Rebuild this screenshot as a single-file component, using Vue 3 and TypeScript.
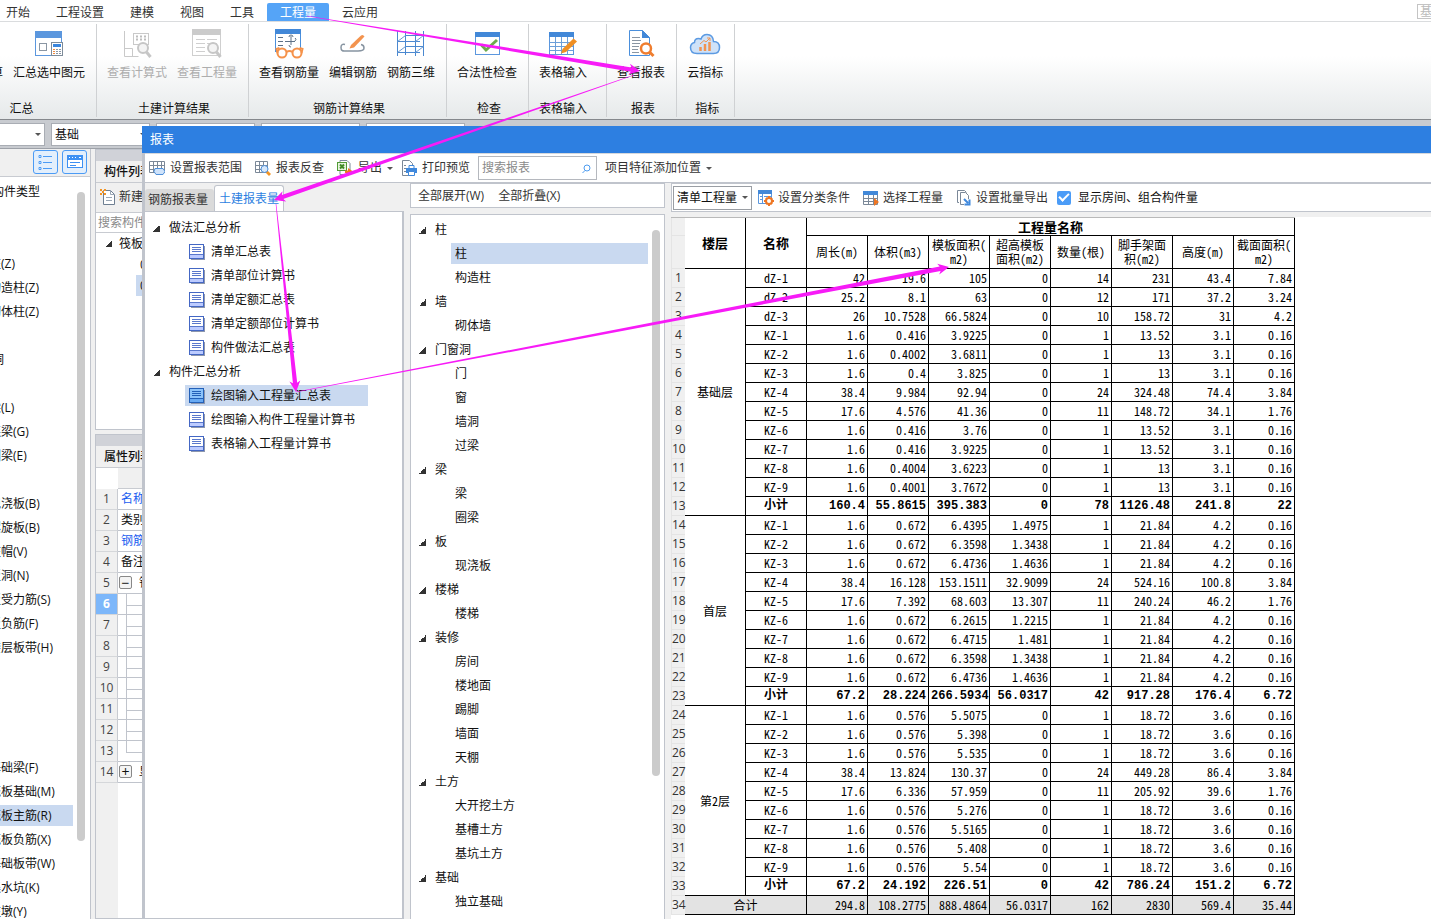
<script setup lang="ts">
import { ref } from 'vue'

interface RibbonItem { label: string; icon: string; disabled?: boolean }
interface RibbonGroup { title: string; kind?: string; items: RibbonItem[] }
interface TreeGroup { title: string; items: string[] }
interface Row { name: string; values: string[]; total?: boolean }
interface Floor { name: string; rows: Row[] }

const menus = ['开始', '工程设置', '建模', '视图', '工具', '工程量', '云应用']
const activeMenu = ref('工程量')

const icons: Record<string, string> = {
  sumAll: '<rect x="3.5" y="3.5" width="25" height="22" fill="#fff" stroke="#5b97de"/>',
  sumPick:
    '<rect x="2.5" y="2.5" width="26" height="24" fill="#fff" stroke="#5b97de"/><rect x="2" y="2" width="27" height="7" fill="#5b97de"/><rect x="6.5" y="14.5" width="7" height="7" fill="#fff" stroke="#8a96a3"/><rect x="18.5" y="13.5" width="11" height="13" fill="#fff" stroke="#7d8b99"/><rect x="20" y="15" width="8" height="3" fill="#3b86dd"/><path d="M20 20.5h2M20 22.5h2M20 24.5h2" stroke="#f08a3c"/><path d="M23 20.5h2M26 20.5h2M23 22.5h2M26 22.5h2M23 24.5h2M26 24.5h2" stroke="#8a96a3"/>',
  formula:
    '<path d="M3.5 2v25.500h14M3.500 19.500h8v8" fill="none" stroke="#c9c9c9"/><rect x="12.500" y="4.500" width="15" height="11" fill="#fff" stroke="#c9c9c9"/><path d="M15 7.500h2M19 7.500h2M23 7.500h2M15 10.500h2M19 10.500h2M23 10.500h2" stroke="#bdbdbd" stroke-width="2"/><circle cx="22" cy="19" r="5" fill="#f4f4f4" stroke="#c6c6c6" stroke-width="2"/><path d="M25.500 23l4 5" stroke="#c6c6c6" stroke-width="3"/>',
  quantity:
    '<rect x="1.500" y=".5" width="28" height="26" fill="#fff" stroke="#cfcfcf"/><rect x="1" y="0" width="29" height="6" fill="#cbcbcb"/><path d="M5 10.500h9M16 10.500h10M5 14.500h9M16 14.500h10M5 18.500h9M5 22.500h9" stroke="#cfcfcf"/><circle cx="22" cy="19" r="5" fill="#f4f4f4" stroke="#c6c6c6" stroke-width="2"/><path d="M25.500 23l4 5" stroke="#c6c6c6" stroke-width="3"/>',
  rebarView:
    '<rect x="2.500" y=".5" width="25" height="22" fill="#fff" stroke="#4a8fdc"/><rect x="2" y="0" width="26" height="5" fill="#4288d8"/><path d="M5 8.500h5M5 12.500h5M5 16.500h5M12 12.500h10M18 7v9M16 8q0-2 2-2t2 2M22 12q2-2 0-3M16 16q0 2 2 2" fill="none" stroke="#5e7186"/><circle cx="9" cy="24" r="4.500" fill="#fff" stroke="#f5924a" stroke-width="2"/><circle cx="24" cy="24" r="4.500" fill="#fff" stroke="#f5924a" stroke-width="2"/><path d="M13.500 23q3-2 6 0M4.500 24l-1-4 3-1M28.500 24l1-4-3-1" fill="none" stroke="#f5924a" stroke-width="2"/>',
  rebarEdit:
    '<path d="M8 15.500q-4-1-4 3t4 3.500h13q6 0 6-3t-3-3.500" fill="none" stroke="#8794a1" stroke-width="1.500"/><path d="M14 16l10-9.500q2-1.500 3.500 1L17 18.500l-4.500 1z" fill="#f3934e"/>',
  rebar3d:
    '<path d="M2.500 2v25M10.500 2v24M20.500 2v25M28.500 2v25M10 6.500h19M2 12.500h23M10 17.500h19M2 23.500h23" fill="none" stroke="#4a88d0"/><path d="M2.500 12.500l8-6M20.500 12.500l8-6M2.500 23.500l8-6M20.500 23.500l8-6" fill="none" stroke="#6b9bd2"/>',
  check:
    '<rect x="4.500" y="3.500" width="24" height="22" fill="#fff" stroke="#5b97de"/><rect x="4" y="3" width="25" height="5" fill="#4288d8"/><path d="M10 15.500l5 5.500L26 11" fill="none" stroke="#6cab4c" stroke-width="3"/>',
  sheet:
    '<rect x="2.500" y="3.500" width="24" height="22" fill="#fff" stroke="#5b97de"/><rect x="2" y="3" width="25" height="5" fill="#4288d8"/><path d="M3 13.500h23M3 17.500h23M3 21.500h23M8.500 8v17M14.500 8v17M20.500 8v17" stroke="#6c9fd9"/><path d="M26.500 9.500l3.500 3L19 23l-5 1.500 1.500-4.500z" fill="#ef8f24"/>',
  report:
    '<path d="M4.500 1.500h13l7 7v18h-20z" fill="#fff" stroke="#4a8fdc"/><path d="M17 1v8h8z" fill="#4288d8"/><path d="M7 8.500h8M7 11.500h9M7 14.500h8M7 17.500h7M7 20.500h6M7 23.500h7" stroke="#8a96a3"/><circle cx="21" cy="19.500" r="5" fill="#fff" stroke="#ef7d2e" stroke-width="2.500"/><path d="M24.500 23l4 4" stroke="#ef7d2e" stroke-width="3"/>',
  cloud:
    '<path d="M8 24.500q-6.500 0-6.500-6 0-4 4-5 0-4 4-4 1.500 0 2.500.5 1.500-4.500 6-4.500 6 0 6.500 7 6 0 6 6t-6 6z" fill="#cfe2f8" stroke="#5b9ae2" stroke-width="1.500"/><path d="M11.500 22v-4M16 22v-7M20.500 22v-9" stroke="#f19450" stroke-width="2.500"/><path d="M11 15l4-3.500 2 1.500 4-4M18 9h3v3" fill="none" stroke="#f19450"/>'
}

const ribbon: RibbonGroup[] = [
  { title: '汇总', kind: 'first', items: [{ label: '汇总计算', icon: 'sumAll' }, { label: '汇总选中图元', icon: 'sumPick' }] },
  { title: '土建计算结果', items: [{ label: '查看计算式', icon: 'formula', disabled: true }, { label: '查看工程量', icon: 'quantity', disabled: true }] },
  { title: '钢筋计算结果', items: [{ label: '查看钢筋量', icon: 'rebarView' }, { label: '编辑钢筋', icon: 'rebarEdit' }, { label: '钢筋三维', icon: 'rebar3d' }] },
  { title: '检查', items: [{ label: '合法性检查', icon: 'check' }] },
  { title: '表格输入', kind: 'roomy', items: [{ label: '表格输入', icon: 'sheet' }] },
  { title: '报表', items: [{ label: '查看报表', icon: 'report' }] },
  { title: '指标', items: [{ label: '云指标', icon: 'cloud' }] }
]

const componentTypes: { text: string; top?: boolean }[] = [
  { text: '常用构件类型', top: true }, { text: '' }, { text: '' },
  { text: '柱(Z)' }, { text: '构造柱(Z)' }, { text: '砌体柱(Z)' }, { text: '' },
  { text: '门窗洞', top: true }, { text: '' },
  { text: '梁(L)' }, { text: '连梁(G)' }, { text: '圈梁(E)' }, { text: '' },
  { text: '现浇板(B)' }, { text: '螺旋板(B)' }, { text: '柱帽(V)' }, { text: '板洞(N)' },
  { text: '板受力筋(S)' }, { text: '板负筋(F)' }, { text: '楼层板带(H)' },
  { text: '' }, { text: '' }, { text: '' }, { text: '' },
  { text: '基础梁(F)' }, { text: '筏板基础(M)' }, { text: '筏板主筋(R)' }, { text: '筏板负筋(X)' },
  { text: '基础板带(W)' }, { text: '集水坑(K)' }, { text: '柱墩(Y)' }
]
const activeType = ref('筏板主筋(R)')

const properties: { text: string; link?: boolean; fold?: string; branch?: boolean }[] = [
  { text: '名称', link: true }, { text: '类别' }, { text: '钢筋', link: true }, { text: '备注' },
  { text: '钢', fold: '−' },
  ...Array.from({ length: 8 }, () => ({ text: '', branch: true })),
  { text: '显', fold: '+' }
]

const reportTree: TreeGroup[] = [
  { title: '做法汇总分析', items: ['清单汇总表', '清单部位计算书', '清单定额汇总表', '清单定额部位计算书', '构件做法汇总表'] },
  { title: '构件汇总分析', items: ['绘图输入工程量汇总表', '绘图输入构件工程量计算书', '表格输入工程量计算书'] }
]
const activeReport = ref('绘图输入工程量汇总表')

const partTree: TreeGroup[] = [
  { title: '柱', items: ['柱', '构造柱'] },
  { title: '墙', items: ['砌体墙'] },
  { title: '门窗洞', items: ['门', '窗', '墙洞', '过梁'] },
  { title: '梁', items: ['梁', '圈梁'] },
  { title: '板', items: ['现浇板'] },
  { title: '楼梯', items: ['楼梯'] },
  { title: '装修', items: ['房间', '楼地面', '踢脚', '墙面', '天棚'] },
  { title: '土方', items: ['大开挖土方', '基槽土方', '基坑土方'] },
  { title: '基础', items: ['独立基础'] }
]
const activePart = ref('柱')

const columns = ['周长(m)', '体积(m3)', '模板面积(\nm2)', '超高模板\n面积(m2)', '数量(根)', '脚手架面\n积(m2)', '高度(m)', '截面面积(\nm2)']

function rows(text: string): Row[] {
  return text.trim().split('\n').map((line) => {
    const [name, ...values] = line.trim().split(' ')
    return { name, values, total: name === '小计' }
  })
}

const floors: Floor[] = [
  {
    name: '基础层',
    rows: rows(`
      dZ-1 42 19.6 105 0 14 231 43.4 7.84
      dZ-2 25.2 8.1 63 0 12 171 37.2 3.24
      dZ-3 26 10.7528 66.5824 0 10 158.72 31 4.2
      KZ-1 1.6 0.416 3.9225 0 1 13.52 3.1 0.16
      KZ-2 1.6 0.4002 3.6811 0 1 13 3.1 0.16
      KZ-3 1.6 0.4 3.825 0 1 13 3.1 0.16
      KZ-4 38.4 9.984 92.94 0 24 324.48 74.4 3.84
      KZ-5 17.6 4.576 41.36 0 11 148.72 34.1 1.76
      KZ-6 1.6 0.416 3.76 0 1 13.52 3.1 0.16
      KZ-7 1.6 0.416 3.9225 0 1 13.52 3.1 0.16
      KZ-8 1.6 0.4004 3.6223 0 1 13 3.1 0.16
      KZ-9 1.6 0.4001 3.7672 0 1 13 3.1 0.16
      小计 160.4 55.8615 395.383 0 78 1126.48 241.8 22`)
  },
  {
    name: '首层',
    rows: rows(`
      KZ-1 1.6 0.672 6.4395 1.4975 1 21.84 4.2 0.16
      KZ-2 1.6 0.672 6.3598 1.3438 1 21.84 4.2 0.16
      KZ-3 1.6 0.672 6.4736 1.4636 1 21.84 4.2 0.16
      KZ-4 38.4 16.128 153.1511 32.9099 24 524.16 100.8 3.84
      KZ-5 17.6 7.392 68.603 13.307 11 240.24 46.2 1.76
      KZ-6 1.6 0.672 6.2615 1.2215 1 21.84 4.2 0.16
      KZ-7 1.6 0.672 6.4715 1.481 1 21.84 4.2 0.16
      KZ-8 1.6 0.672 6.3598 1.3438 1 21.84 4.2 0.16
      KZ-9 1.6 0.672 6.4736 1.4636 1 21.84 4.2 0.16
      小计 67.2 28.224 266.5934 56.0317 42 917.28 176.4 6.72`)
  },
  {
    name: '第2层',
    rows: rows(`
      KZ-1 1.6 0.576 5.5075 0 1 18.72 3.6 0.16
      KZ-2 1.6 0.576 5.398 0 1 18.72 3.6 0.16
      KZ-3 1.6 0.576 5.535 0 1 18.72 3.6 0.16
      KZ-4 38.4 13.824 130.37 0 24 449.28 86.4 3.84
      KZ-5 17.6 6.336 57.959 0 11 205.92 39.6 1.76
      KZ-6 1.6 0.576 5.276 0 1 18.72 3.6 0.16
      KZ-7 1.6 0.576 5.5165 0 1 18.72 3.6 0.16
      KZ-8 1.6 0.576 5.408 0 1 18.72 3.6 0.16
      KZ-9 1.6 0.576 5.54 0 1 18.72 3.6 0.16
      小计 67.2 24.192 226.51 0 42 786.24 151.2 6.72`)
  }
]
const grandTotal = ['294.8', '108.2775', '888.4864', '56.0317', '162', '2830', '569.4', '35.44']
const firstNumber = (index: number) => floors.slice(0, index).reduce((sum, floor) => sum + floor.rows.length, 1)

/* Tapered arrow: thin at the start, widening up to its head. */
function arrow(x1: number, y1: number, x2: number, y2: number): string {
  const length = Math.hypot(x2 - x1, y2 - y1)
  const ux = (x2 - x1) / length
  const uy = (y2 - y1) / length
  const at = (back: number, side: number) =>
    `${(x2 - ux * back - uy * side).toFixed(1)},${(y2 - uy * back + ux * side).toFixed(1)}`
  return [at(length, 0.3), at(9, 2.2), at(11, 5.5), at(0, 0), at(11, -5.5), at(9, -2.2), at(length, -0.3)].join(' ')
}
const arrows = [arrow(307, 16, 640, 71), arrow(634, 75, 274, 200), arrow(276, 204, 296, 392), arrow(296, 392, 949, 267)]
</script>

<template>
  <div class="app">
    <nav class="menubar">
      <button v-for="m in menus" :key="m" class="menu" :class="{ active: m === activeMenu }" @click="activeMenu = m">{{ m }}</button>
      <span class="corner">基</span>
    </nav>

    <section class="ribbon">
      <div v-for="g in ribbon" :key="g.title" class="group" :class="g.kind">
        <div class="group-items">
          <button v-for="item in g.items" :key="item.label" class="tool" :disabled="item.disabled">
            <svg width="32" height="30" viewBox="0 0 32 30" aria-hidden="true" v-html="icons[item.icon]"></svg>
            <span>{{ item.label }}</span>
          </button>
        </div>
        <div class="group-title">{{ g.title }}</div>
      </div>
    </section>

    <section class="optionbar">
      <span class="combo short"><select aria-label="楼层"><option></option></select></span>
      <span class="combo"><select aria-label="分类"><option>基础</option></select></span>
      <span v-for="n in 3" :key="n" class="combo"><select :aria-label="'选项' + n"><option></option></select></span>
    </section>

    <main class="workspace">
      <aside class="types">
        <header class="types-head">
          <button class="square" aria-label="列表">
            <svg width="16" height="16" viewBox="0 0 16 16"><path d="M5 2.500h9M5 8.500h9M5 14.500h9" stroke="#4b9bf5"/><path d="M1 1.500h2v2H1zM1 7.500h2v2H1zM1 13.500h2v2H1z" fill="#fff" stroke="#4b9bf5"/></svg>
          </button>
          <button class="square" aria-label="面板">
            <svg width="16" height="16" viewBox="0 0 16 16"><rect x=".5" y="1.500" width="15" height="12" fill="#fff" stroke="#3d90f3"/><path d="M0 1h16v5H0z" fill="#3d90f3"/><path d="M2 3.500h1M5 3.500h1M8 3.500h1M12 3l1 1 1-1" stroke="#fff" fill="none"/><path d="M3 8.500h10M3 11.500h6" stroke="#3d90f3"/></svg>
          </button>
        </header>
        <div class="types-body">
          <ul class="types-list">
            <li v-for="(t, i) in componentTypes" :key="i" :class="{ top: t.top, selected: t.text === activeType }">{{ t.text }}</li>
          </ul>
          <i class="scroll"></i>
        </div>
      </aside>

      <div class="docks">
        <section class="dock components">
          <div class="grip"></div>
          <h2>构件列表</h2>
          <div class="dock-tools">
            <button class="flat">
              <svg width="16" height="16" viewBox="0 0 16 16"><path d="M3.500 1.500h7l4 4v10h-11z" fill="#fff" stroke="#6e7f92"/><path d="M10.500 1.500v4h4M6 8.500h6M6 11.500h6" fill="none" stroke="#9aa7b5"/><path d="M0 0h2v2H0zM4 0h2v2H4zM2 2h2v2H2zM0 4h2v2H0zM4 4h2v2H4z" fill="#f39423"/></svg>
              <span>新建</span>
            </button>
          </div>
          <input class="dock-search" type="text" placeholder="搜索构件" aria-label="搜索构件" />
          <ul class="dock-tree">
            <li><i class="fold"></i>筏板</li>
            <li class="entry">0</li>
            <li class="entry picked">0</li>
          </ul>
        </section>

        <section class="dock props">
          <div class="grip"></div>
          <h2>属性列表</h2>
          <div class="prop-head"><span></span></div>
          <ol class="prop-rows">
            <li v-for="(p, i) in properties" :key="i" :class="{ current: i === 5, branch: p.branch, last: i === 12 }">
              <span class="no">{{ i + 1 }}</span>
              <span class="value" :class="{ link: p.link }"><button v-if="p.fold" class="toggle">{{ p.fold }}</button>{{ p.text }}</span>
            </li>
          </ol>
          <div class="prop-rest"></div>
        </section>
      </div>
    </main>

    <section class="dialog" role="dialog" aria-label="报表">
      <header class="titlebar">报表</header>
      <div class="dialog-body">
        <div class="dialog-tools">
          <button class="flat">
            <svg width="16" height="16" viewBox="0 0 16 16"><path d="M.5 1.500h15v11H.5zM.5 5.500h15M.5 9.500h15M4.500 1v11M8.500 1v11M12.500 1v11" fill="#fff" stroke="#7b8898"/><path d="M6 8.500h8l2 3-2 3H7l-2-3z" fill="#cfe3fb" stroke="#4d8fd9"/></svg>
            <span>设置报表范围</span>
          </button>
          <button class="flat">
            <svg width="16" height="16" viewBox="0 0 16 16"><path d="M.5 1.500h12v11H.5zM.5 5.500h12M.5 9.500h12M4.500 1v11M8.500 1v11" fill="#fff" stroke="#7b8898"/><circle cx="9.500" cy="9" r="3.500" fill="#d7e8fb" stroke="#4d8fd9"/><path d="M13 11l3 3-2 2-3-3z" fill="#f39423"/></svg>
            <span>报表反查</span>
          </button>
          <button class="flat menu-button">
            <svg width="16" height="16" viewBox="0 0 16 16"><path d="M3 .5h7l3 3v11H3z" fill="#fff" stroke="#7b8898"/><rect x=".5" y="2.500" width="9" height="8" fill="#e7f4df" stroke="#519b35"/><path d="M3 4.500l4 4M7 4.500l-4 4" stroke="#418a27" stroke-width="2"/><path d="M8 10.500h3V8l5 3.500-5 4V13H8z" fill="#ee7623"/></svg>
            <span>导出</span><i class="caret"></i>
          </button>
          <button class="flat">
            <svg width="16" height="16" viewBox="0 0 16 16"><path d="M1.500.5h7l3 3v12h-10z" fill="#fff" stroke="#7b8898"/><path d="M3 5.500h2M3 8.500h2M3 11.500h2" stroke="#7b8898"/><path d="M8 5.500h5v3H8z" fill="#fff" stroke="#3f88dc"/><rect x="5" y="8" width="11" height="5" fill="#3f88dc"/><path d="M7.500 11.500h6v4h-6z" fill="#fff" stroke="#3f88dc"/></svg>
            <span>打印预览</span>
          </button>
          <label class="search">
            <input type="text" placeholder="搜索报表" aria-label="搜索报表" />
            <svg width="14" height="11" viewBox="0 0 14 11"><circle cx="8" cy="5" r="3" fill="none" stroke="#4d9cf0"/><path d="M6 7.500L3.500 10" stroke="#4d9cf0"/></svg>
          </label>
          <button class="flat menu-button"><span>项目特征添加位置</span><i class="caret"></i></button>
        </div>

        <div class="panes">
          <div class="pane reports">
            <div class="tabs" role="tablist">
              <button role="tab" aria-selected="false">钢筋报表量</button>
              <button role="tab" aria-selected="true" class="on">土建报表量</button>
            </div>
            <div class="report-tree">
              <template v-for="g in reportTree" :key="g.title">
                <div class="node"><i class="fold"></i>{{ g.title }}</div>
                <button v-for="r in g.items" :key="r" class="leaf" :class="{ selected: r === activeReport }" @click="activeReport = r">
                  <svg width="16" height="16" viewBox="0 0 16 16"><path d="M2 2h14v14H2z" fill="#8d97ad"/><rect x=".5" y=".5" width="14" height="14" :fill="r === activeReport ? '#8cc3fa' : '#fff'" :stroke="r === activeReport ? '#2360b8' : '#4467c4'"/><path d="M1 11h13v3H1z" :fill="r === activeReport ? '#68aaf3' : '#bccbff'"/><path d="M3 3.500h9M3 5.500h9M3 7.500h9M1 10.500h13" :stroke="r === activeReport ? '#2360b8' : '#5a78cc'"/></svg>
                  <span>{{ r }}</span>
                </button>
              </template>
            </div>
          </div>

          <div class="pane parts">
            <div class="box part-tools">
              <button class="flat"><span>全部展开(W)</span></button>
              <button class="flat"><span>全部折叠(X)</span></button>
            </div>
            <div class="box part-box">
              <div class="part-tree">
                <template v-for="g in partTree" :key="g.title">
                  <div class="node"><i class="fold"></i>{{ g.title }}</div>
                  <button v-for="p in g.items" :key="p" class="leaf" :class="{ selected: p === activePart && g.title === activePart }" @click="activePart = p">{{ p }}</button>
                </template>
              </div>
              <i class="scroll"></i>
            </div>
          </div>

          <div class="pane sheet">
            <div class="box sheet-tools">
              <span class="combo kind"><select aria-label="工程量类型"><option>清单工程量</option></select></span>
              <button class="flat">
                <svg width="16" height="16" viewBox="0 0 16 16"><path d="M.5.5h13v13H.5zM4.500 4v9M2 6.500h2M2 9.500h2M6 6.500h7" fill="#fff" stroke="#5b97de"/><path d="M0 0h14v4H0z" fill="#4288d8"/><circle cx="11" cy="11" r="3" fill="#fff" stroke="#ee7623" stroke-width="2"/><path d="M11 6v2M11 14v2M6 11h2M14 11h2M8 8l1 1M13 13l1 1M14 8l-1 1M9 13l-1 1" stroke="#ee7623" stroke-width="2"/></svg>
                <span>设置分类条件</span>
              </button>
              <button class="flat">
                <svg width="16" height="16" viewBox="0 0 16 16"><path d="M.5 1.500h14v13H.5zM.5 8.500h14M.5 11.500h14M5.500 4v10M10.500 4v10" fill="#fff" stroke="#7b8898"/><path d="M0 1h15v4H0z" fill="#4288d8"/><path d="M11 8l5 4-5 4z" fill="#ee7623"/></svg>
                <span>选择工程量</span>
              </button>
              <button class="flat">
                <svg width="16" height="16" viewBox="0 0 16 16"><path d="M3 12.500H1.500V.5h7l2 2" fill="none" stroke="#7b8898"/><path d="M8 14.500H4.500v-12h5l3 3V9" fill="#fff" stroke="#7b8898"/><path d="M8 9l4 4M13.500 9.500v5h-5" fill="none" stroke="#3f88dc" stroke-width="2"/></svg>
                <span>设置批量导出</span>
              </button>
              <label class="check"><input type="checkbox" checked /><span>显示房间、组合构件量</span></label>
            </div>

            <div class="sheet-area">
              <table class="grid">
                <colgroup><col class="c-no" /><col v-for="n in 10" :key="n" class="c-data" /></colgroup>
                <thead>
                  <tr class="h1"><th class="no"></th><th rowspan="2" class="big">楼层</th><th rowspan="2" class="big">名称</th><th colspan="8" class="big">工程量名称</th></tr>
                  <tr class="h2"><th class="no"></th><th v-for="c in columns" :key="c">{{ c }}</th></tr>
                </thead>
                <tbody>
                  <template v-for="(f, fi) in floors" :key="f.name">
                    <tr v-for="(r, ri) in f.rows" :key="r.name" :class="{ total: r.total }">
                      <th class="no" scope="row">{{ firstNumber(fi) + ri }}</th>
                      <td v-if="ri === 0" class="mid floor" :rowspan="f.rows.length">{{ f.name }}</td>
                      <td class="mid">{{ r.name }}</td>
                      <td v-for="(v, vi) in r.values" :key="vi">{{ v }}</td>
                    </tr>
                  </template>
                  <tr class="grand">
                    <th class="no" scope="row">34</th>
                    <td class="mid" colspan="2">合计</td>
                    <td v-for="v in grandTotal" :key="v">{{ v }}</td>
                  </tr>
                </tbody>
              </table>
            </div>
          </div>
        </div>
      </div>
    </section>

    <svg class="arrows" aria-hidden="true"><polygon v-for="a in arrows" :key="a" :points="a" fill="#f71bf7" /></svg>
  </div>
</template>

<style>
html, body { margin: 0; height: 100%; overflow: hidden; }
</style>

<style scoped>
* { box-sizing: border-box; }
.app { position: relative; display: flex; flex-direction: column; height: 100vh; overflow: hidden; background: #fff; color: #111; font: 12px/18px "Open Sans", "Noto Sans CJK SC", sans-serif; }
button, input, select { font: inherit; color: inherit; margin: 0; padding: 0; border: 0; background: none; border-radius: 0; outline: none; }
ul, ol { list-style: none; margin: 0; padding: 0; }
svg { flex: none; display: block; }

.menubar { display: flex; flex: none; height: 22px; padding-top: 3px; border-bottom: 1px solid #dadcde; color: #333; }
.menu { flex: none; height: 18px; padding: 1px 13px 0; line-height: 18px; }
.menu:first-child { margin-left: -7px; }
.menu.active { background: #55a4f7; color: #fff; border-radius: 2px 2px 0 0; }
.corner { flex: none; width: 14px; height: 15px; margin: 1px 0 0 auto; padding-left: 2px; overflow: hidden; border: 1px solid #c4c4c4; border-right: 0; color: #bbb; line-height: 13px; }

.ribbon { display: flex; flex: none; height: 97px; background: linear-gradient(#fff 35%, #e6e9ea); }
.group { flex: none; display: flex; flex-direction: column; justify-content: space-between; margin: 2px 0; padding: 5px 11px 0 10px; border-right: 1px solid #cfd1d3; }
.group.first { width: 149px; margin-left: -52px; padding-left: 0; }
.group.first .group-items { justify-content: flex-end; }
.group.first .group-title { padding-left: 10px; }
.group.roomy { padding-right: 19px; }
.group-items { display: flex; gap: 10px; }
.group-title { margin-bottom: -1px; padding-left: 4px; text-align: center; white-space: nowrap; }
.group.roomy .group-title { padding-left: 0; }
.tool { flex: none; display: flex; flex-direction: column; align-items: center; gap: 5px; white-space: nowrap; }
.tool:disabled { color: #adadad; }

.optionbar { display: flex; flex: none; gap: 6px; height: 30px; padding-top: 3px; background: #c8cbd0; border-top: 1px solid #85888c; border-bottom: 1px solid #9da1a8; }
.combo { position: relative; flex: none; width: 99px; height: 23px; background: #fff; border: 1px solid #a9adb4; }
.combo.short { width: 45px; border-left: 0; }
.combo select { appearance: none; display: block; width: 100%; height: 100%; padding-left: 3px; }
.combo::after, .caret { content: ""; width: 0; height: 0; border: 3px solid transparent; border-top-color: #555; border-bottom: 0; }
.combo::after { position: absolute; right: 3px; top: 9px; pointer-events: none; }

.workspace { display: flex; flex: 1; min-height: 0; background: #f0f0f0; }
.types { display: flex; flex-direction: column; flex: none; width: 91px; background: #fff; border-right: 1px solid #c0c4cc; }
.types-head { display: flex; flex: none; gap: 4px; justify-content: flex-end; height: 28px; padding: 1px 3px 0 0; background: #f0f0f0; border-bottom: 1px solid #c8cbd1; }
.square { display: grid; place-items: center; width: 25px; height: 24px; background: #e3effc; border: 1px solid #4b9bf5; border-radius: 3px; }
.types-body { display: flex; flex: 1; min-height: 0; overflow: hidden; padding-top: 4px; }
.types-list { flex: none; width: 73px; margin-right: 4px; overflow: hidden; }
.types-list li { height: 21px; margin-bottom: 3px; line-height: 21px; text-indent: -11px; white-space: nowrap; }
.types-list li.top { text-indent: -32px; }
.types-list li.selected { background: #c9d9f0; }
.scroll { flex: none; width: 8px; height: 649px; margin-top: 11px; border-radius: 4px; background: #cbcbcb; }

.docks { display: flex; flex-direction: column; flex: 1; gap: 4px; margin-left: 4px; min-width: 0; }
.dock { display: flex; flex-direction: column; background: #fff; border: 1px solid #c0c4cc; }
.components { flex: none; height: 281px; }
.props { flex: 1; min-height: 0; overflow: hidden; }
.grip { flex: none; height: 11px; background: #d0d2d8; }
.dock h2 { flex: none; margin: 0; height: 22px; padding-left: 8px; background: #f0f0f0; border-bottom: 1px solid #c8cbd1; font-size: 12px; font-weight: 500; line-height: 22px; }
.dock-tools { flex: none; height: 30px; padding-top: 3px; background: #f0f0f0; border-bottom: 1px solid #c8cbd1; }
.dock-tools .flat { gap: 3px; }
.dock-search { flex: none; width: 100%; height: 20px; padding-left: 2px; border-bottom: 1px solid #c8cbd1; }
input::placeholder { color: #8a8a8a; opacity: 1; }
.dock-tree li { display: flex; align-items: center; height: 21px; padding-left: 9px; }
.dock-tree li.entry { margin-left: 40px; padding-left: 4px; }
.dock-tree .fold { margin-right: 7px; }
.picked { background: #c9d9f0; }
.fold { flex: none; width: 7px; height: 7px; background: linear-gradient(135deg, transparent 50%, #333 50%); }

.prop-head { flex: none; height: 21px; padding-left: 22px; }
.prop-head span { display: block; height: 100%; background: #f0f0f0; border-bottom: 1px solid #c8cbd1; }
.prop-rows li { display: flex; height: 21px; line-height: 20px; }
.no { flex: none; width: 22px; text-align: center; background: #f0f0f0; border-right: 1px solid #c8cbd1; border-bottom: 1px solid #d5d7da; color: #444; }
.value { position: relative; display: flex; gap: 7px; flex: 1; padding-left: 3px; border-bottom: 1px solid #c0c4cc; }
.value.link { color: #1a5df0; }
.current .no { background: #7db7fa; color: #fff; font-weight: 700; }
.toggle { width: 13px; height: 13px; margin: 3px 0 0 -2px; border: 1px solid #888; border-radius: 2px; background: #f4f4f4; line-height: 10px; font-size: 14px; }
.branch .value::before { content: ""; position: absolute; left: 8px; right: 0; top: 0; height: 11px; border-left: 1px solid #c0c4cc; border-bottom: 1px solid #c0c4cc; }
.branch:not(.last) .value::after { content: ""; position: absolute; left: 8px; top: 10px; height: 11px; border-left: 1px solid #c0c4cc; }
.prop-rest { flex: 1; width: 22px; background: #f0f0f0; }

.dialog { position: absolute; inset: 126px 0 0 142px; display: flex; flex-direction: column; }
.titlebar { flex: none; height: 27px; padding-left: 8px; background: #2d7fe1; color: #fff; line-height: 28px; }
.dialog-body { display: flex; flex-direction: column; flex: 1; min-height: 0; overflow: hidden; background: #f0f0f0; border-left: 3px solid #c0c4cc; }
.dialog-tools { display: flex; flex: none; align-items: center; gap: 4px; height: 30px; background: #fff; border-top: 1px solid #d5d8dc; border-bottom: 1px solid #c0c4cc; }
.flat { flex: none; display: flex; align-items: center; gap: 5px; height: 22px; padding: 0 5px 0 4px; border-radius: 3px; color: #333; white-space: nowrap; }
.menu-button { padding-right: 0; }
.search { display: flex; align-items: center; width: 119px; height: 24px; margin-left: -1px; padding: 0 3px; background: #fff; border: 1px solid #b5b8be; }
.search input { flex: 1; min-width: 0; }

.panes { display: flex; flex: 1; min-height: 0; gap: 6px; }
.pane { display: flex; flex-direction: column; flex: none; min-height: 0; }
.reports { width: 259px; }
.tabs { display: flex; flex: none; align-items: flex-end; height: 28px; }
.tabs button { height: 22px; width: 69px; padding-left: 3px; background: #dadada; color: #333; border-radius: 3px 3px 0 0; text-align: left; white-space: nowrap; }
.tabs .on { height: 26px; width: 70px; padding-left: 4px; background: #fff; border: 1px solid #c0c4cc; border-bottom: 0; color: #2d7fe1; }
.report-tree { display: flex; flex-direction: column; flex: 1; padding-top: 4px; background: #fff; border: 1px solid #c0c4cc; border-width: 1px 2px 1px 0; }
.node { flex: none; display: flex; align-items: center; gap: 9px; height: 24px; padding-left: 8px; }
.leaf { flex: none; display: flex; align-items: center; height: 21px; margin: 1px 0 2px; white-space: nowrap; }
.report-tree .leaf { gap: 6px; width: 183px; margin-left: 40px; padding-left: 4px; }
.leaf.selected { background: #c9d9f0; }
.parts { width: 255px; gap: 6px; }
.box { background: #fff; border: 1px solid #c0c4cc; }
.part-tools { display: flex; flex: none; align-items: center; gap: 5px; height: 25px; padding-left: 3px; }
.part-box { display: flex; flex: 1; min-height: 0; overflow: hidden; border-bottom: 0; }
.part-tree { display: flex; flex-direction: column; width: 237px; margin-right: 4px; padding-top: 3px; }
.part-tree .leaf { width: 197px; margin-left: 40px; padding-left: 4px; }
.part-box .scroll { height: 546px; margin-top: 15px; }

.sheet { flex: 1; min-width: 0; background: #f0f0f0; }
.sheet-tools { display: flex; flex: none; align-items: center; gap: 4px; height: 29px; padding-left: 1px; border-right: 0; }
.combo.kind { width: 79px; height: 24px; border-color: #9a9ea4; margin-right: -2px; }
.sheet-tools .flat { gap: 4px; }
.check { display: flex; align-items: center; gap: 7px; }
.check input { appearance: none; display: grid; place-items: center; width: 14px; height: 14px; border-radius: 2px; background: #4b9cf7; }
.check input::after { content: ""; width: 8px; height: 4px; margin-bottom: 3px; border: 2px solid #fff; border-width: 0 0 2px 2px; transform: rotate(-45deg); }

.sheet-area { flex: 1; min-height: 0; margin-top: 5px; overflow: hidden; background: #fff; }
.grid { width: 624px; table-layout: fixed; border-collapse: separate; border-spacing: 0; border-top: 1px solid #b9b9b9; color: #000; font-family: "Noto Sans CJK SC", sans-serif; font-feature-settings: "hwid"; line-height: 14px; }
.c-no { width: 14px; }
.c-data { width: 61px; }
.grid th, .grid td { height: 19px; padding: 0 2px; overflow: hidden; border: 1px solid #000; border-width: 0 1px 1px 0; font-weight: 400; text-align: right; white-space: pre; }
.grid thead th { padding: 0; text-align: center; }
.grid .h1 th { height: 18px; }
.grid .h2 th { height: 33px; }
.grid .big { font-size: 13px; font-weight: 700; }
.grid td.mid { text-align: center; }
.grid th.no { padding: 0; overflow: visible; border-color: #e4e4e4; border-width: 0 0 1px 1px; background: #f0f0f0; color: #333; font-family: "Open Sans", sans-serif; font-feature-settings: normal; text-align: center; }
.total td:not(.floor) { font-family: "Liberation Mono", "Noto Sans CJK SC", monospace; font-weight: 700; }
.grand td { background: #e3e3e3; }

.arrows { position: absolute; inset: 0; width: 100%; height: 100%; pointer-events: none; }
</style>
